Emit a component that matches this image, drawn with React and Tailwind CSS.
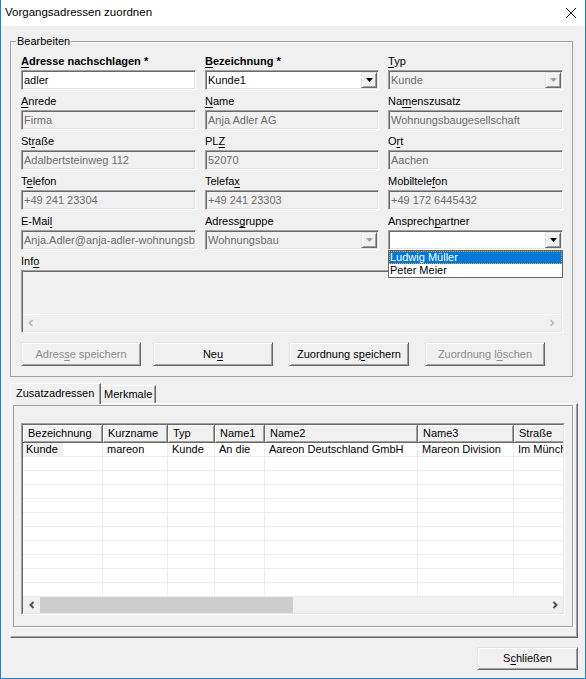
import React from "react";

const sunken =
  "border border-t-[#a0a0a0] border-l-[#a0a0a0] border-r-white border-b-white shadow-[inset_1px_1px_0_#696969,inset_-1px_-1px_0_#e3e3e3]";
const raised =
  "border border-t-[#e3e3e3] border-l-[#e3e3e3] border-r-[#696969] border-b-[#696969] shadow-[inset_1px_1px_0_#ffffff,inset_-1px_-1px_0_#a0a0a0]";

function U({ children }) {
  return <span className="underline underline-offset-[2px] decoration-1">{children}</span>;
}

function Label({ children, bold }) {
  return (
    <div className={`h-[16px] leading-[14px] whitespace-nowrap ${bold ? "font-bold" : ""}`}>
      {children}
    </div>
  );
}

function TextBox({ value, disabled }) {
  return (
    <div
      className={`${sunken} h-[20px] flex items-center pl-[2px] overflow-hidden whitespace-nowrap ${
        disabled ? "bg-[#f0f0f0] text-[#6d6d6d]" : "bg-white text-black"
      }`}
    >
      {value}
    </div>
  );
}

function Tri({ color }) {
  return (
    <svg width="7" height="4" viewBox="0 0 7 4">
      <path d="M0 0H7L3.5 4Z" fill={color} />
    </svg>
  );
}

function Combo({ value, disabled }) {
  return (
    <div
      className={`${sunken} h-[20px] flex items-center pl-[2px] overflow-hidden whitespace-nowrap ${
        disabled ? "bg-[#f0f0f0] text-[#6d6d6d]" : "bg-white text-black"
      }`}
    >
      <span className="flex-1 overflow-hidden">{value}</span>
      <div className={`${raised} bg-[#f0f0f0] w-[16px] h-[16px] mr-[1px] flex items-center justify-center shrink-0`}>
        <Tri color={disabled ? "#a0a0a0" : "#000000"} />
      </div>
    </div>
  );
}

function Field({ label, bold, children, className = "" }) {
  return (
    <div className={`flex flex-col ${className}`}>
      <Label bold={bold}>{label}</Label>
      {children}
    </div>
  );
}

function Chevron({ dir, color, w = 1.6 }) {
  return (
    <svg width="8" height="8" viewBox="0 0 8 8">
      <polyline
        points={dir === "left" ? "5.5,1 2.5,4 5.5,7" : "2.5,1 5.5,4 2.5,7"}
        fill="none"
        stroke={color}
        strokeWidth={w}
      />
    </svg>
  );
}

function Btn({ children, disabled, className = "" }) {
  return (
    <div
      className={`${raised} bg-[#f0f0f0] w-[120px] h-[24px] flex items-center justify-center whitespace-nowrap ${
        disabled ? "text-[#8d8d8d]" : "text-black"
      } ${className}`}
    >
      {children}
    </div>
  );
}

const cols = [
  ["Bezeichnung", 80],
  ["Kurzname", 65],
  ["Typ", 47],
  ["Name1", 50],
  ["Name2", 153],
  ["Name3", 96],
  ["Straße", 100],
];
const row = ["Kunde", "mareon", "Kunde", "An die", "Aareon Deutschland GmbH", "Mareon Division", "Im Münchfeld"];

export default function App() {
  return (
    <div className="w-[586px] h-[679px] bg-[#f0f0f0] border-x border-b border-[#1883d7] flex flex-col text-[11px] text-black font-['Liberation_Sans',Arial,sans-serif] overflow-hidden">
      {/* Title bar */}
      <div className="h-[26px] shrink-0 bg-white flex items-center justify-between pl-[4px] pr-[9px]">
        <span className="text-[11.5px]">Vorgangsadressen zuordnen</span>
        <svg width="10" height="10" viewBox="0 0 10 10">
          <path d="M0 0L10 10M10 0L0 10" stroke="#000" strokeWidth="1" />
        </svg>
      </div>

      {/* Group box Bearbeiten */}
      <div className="relative mt-[15px] ml-[9px] w-[563px] h-[336px] shrink-0 border border-[#a0a0a0] shadow-[inset_1px_1px_0_#ffffff] pt-[12px] pl-[10px]">
        <span className="absolute left-[5px] -top-[7px] px-[1px] bg-[#f0f0f0] leading-[13px]">Bearbeiten</span>

        <div className="grid grid-cols-[175px_174px_175px] gap-x-[9px] gap-y-[4px]">
          <Field bold label={<><U>A</U>dresse nachschlagen *</>}>
            <TextBox value="adler" />
          </Field>
          <Field bold label={<><U>B</U>ezeichnung *</>}>
            <Combo value="Kunde1" />
          </Field>
          <Field label={<><U>T</U>yp</>}>
            <Combo value="Kunde" disabled />
          </Field>

          <Field label={<><U>A</U>nrede</>}>
            <TextBox value="Firma" disabled />
          </Field>
          <Field label={<><U>N</U>ame</>}>
            <TextBox value="Anja Adler AG" disabled />
          </Field>
          <Field label={<>Na<U>m</U>enszusatz</>}>
            <TextBox value="Wohnungsbaugesellschaft" disabled />
          </Field>

          <Field label={<>St<U>r</U>aße</>}>
            <TextBox value="Adalbertsteinweg 112" disabled />
          </Field>
          <Field label={<>PL<U>Z</U></>}>
            <TextBox value="52070" disabled />
          </Field>
          <Field label={<>O<U>r</U>t</>}>
            <TextBox value="Aachen" disabled />
          </Field>

          <Field label={<>T<U>e</U>lefon</>}>
            <TextBox value="+49 241 23304" disabled />
          </Field>
          <Field label={<>Telefa<U>x</U></>}>
            <TextBox value="+49 241 23303" disabled />
          </Field>
          <Field label={<>Mobiltele<U>f</U>on</>}>
            <TextBox value="+49 172 6445432" disabled />
          </Field>

          <Field label={<>E-Mai<U>l</U></>}>
            <TextBox value="Anja.Adler@anja-adler-wohnungsbau.de" disabled />
          </Field>
          <Field label={<>Adress<U>g</U>ruppe</>}>
            <Combo value="Wohnungsbau" disabled />
          </Field>
          <Field label={<>Ansprech<U>p</U>artner</>} className="relative">
            <Combo value="" />
            <div className="absolute left-0 top-[36px] w-full h-[28px] bg-white border border-[#646464] z-20">
              <div className="h-[13px] leading-[13px] bg-[#0078d7] text-white pl-[1px] outline outline-1 outline-dotted outline-[#f0a030] -outline-offset-1">
                Ludwig Müller
              </div>
              <div className="h-[13px] leading-[13px] pl-[1px]">Peter Meier</div>
            </div>
          </Field>

          <Field label={<>Inf<U>o</U></>} className="col-span-3">
            <div className={`${sunken} h-[63px] bg-[#f0f0f0] flex flex-col`}>
              <div className="flex-1" />
              <div className="h-[17px] mx-[1px] mb-[1px] border-t border-white flex items-center justify-between pl-[4px] pr-[5px]">
                <Chevron dir="left" color="#b8b8b8" />
                <Chevron dir="right" color="#b8b8b8" />
              </div>
            </div>
          </Field>
        </div>

        <div className="flex mt-[9px]">
          <Btn disabled>
            Adres<U>s</U>e speichern
          </Btn>
          <Btn className="ml-[12px]">
            Ne<U>u</U>
          </Btn>
          <Btn className="ml-[16px]">
            Zuordnung s<U>p</U>eichern
          </Btn>
          <Btn disabled className="ml-[16px]">
            Zuordnung l<U>ö</U>schen
          </Btn>
        </div>
      </div>

      {/* Tabs */}
      <div className="ml-[9px] mt-[6px] h-[20px] shrink-0 flex items-end">
        <div className="relative z-10 h-[21px] -mb-px w-[91px] bg-[#f0f0f0] border-t border-l border-t-white border-l-white border-r border-r-[#696969] shadow-[inset_-1px_0_0_#a0a0a0] pl-[5px] leading-[18px] whitespace-nowrap">
          Zusatzadressen
        </div>
        <div className="h-[18px] w-[55px] bg-[#f0f0f0] border-t border-t-white border-r border-r-[#696969] shadow-[inset_-1px_0_0_#a0a0a0] pl-[3px] leading-[17px] whitespace-nowrap">
          Merkmale
        </div>
      </div>

      {/* Tab panel */}
      <div className="ml-[9px] w-[568px] h-[235px] shrink-0 border border-t-white border-l-white border-r-[#696969] border-b-[#696969] shadow-[inset_-1px_-1px_0_#a0a0a0] pl-[2px] pt-[1px] pr-[4px] pb-[14px] flex flex-col">
        <div className="flex-1 border border-[#a0a0a0] shadow-[1px_1px_0_#ffffff] px-[7px] pt-[17px] pb-[11px] flex flex-col">
          <div className="flex-1 border border-t-[#a0a0a0] border-l-[#a0a0a0] border-r-white border-b-white flex flex-col">
            <div className="flex-1 border border-t-[#696969] border-l-[#696969] border-r-[#e3e3e3] border-b-[#e3e3e3] bg-white flex flex-col overflow-hidden">
              {/* header */}
              <div className="flex h-[18px] shrink-0">
                {cols.map(([c, w]) => (
                  <div
                    key={c}
                    style={{ width: w }}
                    className="shrink-0 h-[18px] bg-[#f0f0f0] border-r border-b border-r-[#696969] border-b-[#696969] shadow-[inset_1px_1px_0_#ffffff,inset_-1px_-1px_0_#a0a0a0] pl-[5px] leading-[17px] whitespace-nowrap overflow-hidden"
                  >
                    {c}
                  </div>
                ))}
              </div>
              {/* rows */}
              <div className="flex-1 overflow-hidden">
                {Array.from({ length: 11 }).map((_, r) => (
                  <div key={r} className="flex h-[14px]">
                    {cols.map(([c, w], i) => (
                      <div
                        key={c}
                        style={{ width: w }}
                        className="shrink-0 h-[14px] border-r border-b border-[#ececec] leading-[13px] whitespace-nowrap overflow-hidden"
                      >
                        {r === 0 ? (
                          i === 0 ? (
                            <span className="inline-block w-[40px] h-[13px] bg-[#f0f0f0] pl-[3px]">{row[i]}</span>
                          ) : (
                            <span className="pl-[4px]">{row[i]}</span>
                          )
                        ) : null}
                      </div>
                    ))}
                  </div>
                ))}
              </div>
              {/* scrollbar */}
              <div className="h-[16px] shrink-0 flex bg-[#f0f0f0]">
                <div className="w-[17px] flex items-center justify-center">
                  <Chevron dir="left" color="#505050" w={2} />
                </div>
                <div className="w-[253px] bg-[#cdcdcd]" />
                <div className="flex-1" />
                <div className="w-[17px] flex items-center justify-center">
                  <Chevron dir="right" color="#505050" w={2} />
                </div>
              </div>
            </div>
          </div>
        </div>
      </div>

      {/* Bottom button */}
      <div className="flex justify-end mt-[9px] mr-[7px]">
        <div className={`${raised} bg-[#f0f0f0] w-[101px] h-[23px] flex items-center justify-center`}>
          S<U>c</U>hließen
        </div>
      </div>
    </div>
  );
}
